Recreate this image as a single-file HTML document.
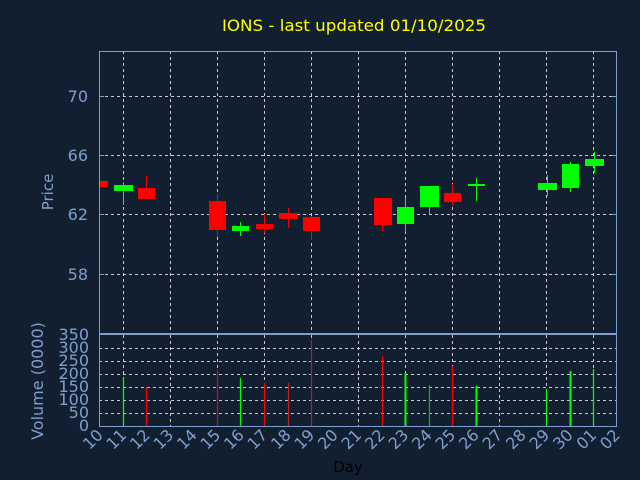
<!DOCTYPE html>
<html><head><meta charset="utf-8"><style>
html,body{margin:0;padding:0;background:#111f30;}
svg{display:block;font-family:"DejaVu Sans","Liberation Sans",sans-serif;}
</style></head><body>
<svg width="640" height="480" viewBox="0 0 640 480" xmlns="http://www.w3.org/2000/svg">
<rect width="640" height="480" fill="#111f30"/>
<text x="354" y="31" fill="#ffff00" font-size="16" text-anchor="middle" textLength="264" lengthAdjust="spacingAndGlyphs">IONS - last updated 01/10/2025</text>
<g stroke="#c8c8c8" stroke-width="1" stroke-dasharray="3,3" fill="none">
<line x1="99" y1="96.5" x2="617" y2="96.5"/>
<line x1="99" y1="155.5" x2="617" y2="155.5"/>
<line x1="99" y1="214.5" x2="617" y2="214.5"/>
<line x1="99" y1="274.5" x2="617" y2="274.5"/>
<line x1="123.5" y1="51" x2="123.5" y2="333"/><line x1="170.5" y1="51" x2="170.5" y2="333"/><line x1="217.5" y1="51" x2="217.5" y2="333"/><line x1="264.5" y1="51" x2="264.5" y2="333"/><line x1="311.5" y1="51" x2="311.5" y2="333"/><line x1="358.5" y1="51" x2="358.5" y2="333"/><line x1="405.5" y1="51" x2="405.5" y2="333"/><line x1="452.5" y1="51" x2="452.5" y2="333"/><line x1="499.5" y1="51" x2="499.5" y2="333"/><line x1="546.5" y1="51" x2="546.5" y2="333"/><line x1="593.5" y1="51" x2="593.5" y2="333"/>
<line x1="99" y1="348.5" x2="617" y2="348.5"/><line x1="99" y1="361.5" x2="617" y2="361.5"/><line x1="99" y1="374.5" x2="617" y2="374.5"/><line x1="99" y1="387.5" x2="617" y2="387.5"/><line x1="99" y1="400.5" x2="617" y2="400.5"/><line x1="99" y1="413.5" x2="617" y2="413.5"/>
<line x1="123.5" y1="335" x2="123.5" y2="427"/><line x1="170.5" y1="335" x2="170.5" y2="427"/><line x1="217.5" y1="335" x2="217.5" y2="427"/><line x1="264.5" y1="335" x2="264.5" y2="427"/><line x1="311.5" y1="335" x2="311.5" y2="427"/><line x1="358.5" y1="335" x2="358.5" y2="427"/><line x1="405.5" y1="335" x2="405.5" y2="427"/><line x1="452.5" y1="335" x2="452.5" y2="427"/><line x1="499.5" y1="335" x2="499.5" y2="427"/><line x1="546.5" y1="335" x2="546.5" y2="427"/><line x1="593.5" y1="335" x2="593.5" y2="427"/>
</g>
<g>
<rect x="99" y="181" width="9" height="6" fill="#ff0000"/>
<line x1="123.5" y1="182" x2="123.5" y2="205" stroke="#00ff00"/><rect x="114" y="185" width="19" height="6" fill="#00ff00"/>
<line x1="146.5" y1="176" x2="146.5" y2="200" stroke="#ff0000"/><rect x="138" y="188" width="17" height="11" fill="#ff0000"/>
<line x1="217.5" y1="194" x2="217.5" y2="237" stroke="#ff0000"/><rect x="209" y="201" width="17" height="29" fill="#ff0000"/>
<line x1="240.5" y1="222" x2="240.5" y2="236" stroke="#00ff00"/><rect x="232" y="226" width="17" height="5" fill="#00ff00"/>
<line x1="264.5" y1="214" x2="264.5" y2="233" stroke="#ff0000"/><rect x="256" y="224" width="17" height="5" fill="#ff0000"/>
<line x1="288.5" y1="208" x2="288.5" y2="228" stroke="#ff0000"/><rect x="279" y="213" width="19" height="6" fill="#ff0000"/>
<line x1="311.5" y1="216" x2="311.5" y2="240" stroke="#ff0000"/><rect x="303" y="217" width="17" height="14" fill="#ff0000"/>
<line x1="382.5" y1="198" x2="382.5" y2="231" stroke="#ff0000"/><rect x="374" y="198" width="18" height="27" fill="#ff0000"/>
<line x1="405.5" y1="198" x2="405.5" y2="232" stroke="#00ff00"/><rect x="397" y="207" width="17" height="17" fill="#00ff00"/>
<line x1="429.5" y1="186" x2="429.5" y2="214" stroke="#00ff00"/><rect x="420" y="186" width="19" height="21" fill="#00ff00"/>
<line x1="452.5" y1="184" x2="452.5" y2="206" stroke="#ff0000"/><rect x="444" y="193" width="17" height="9" fill="#ff0000"/>
<line x1="476.5" y1="178" x2="476.5" y2="201" stroke="#00ff00"/><rect x="468" y="184" width="17" height="2" fill="#00ff00"/>
<line x1="547.5" y1="175" x2="547.5" y2="196" stroke="#00ff00"/><rect x="538" y="183" width="19" height="7" fill="#00ff00"/>
<line x1="570.5" y1="162" x2="570.5" y2="192" stroke="#00ff00"/><rect x="562" y="164" width="17" height="24" fill="#00ff00"/>
<line x1="594.5" y1="152" x2="594.5" y2="173" stroke="#00ff00"/><rect x="585" y="159" width="19" height="7" fill="#00ff00"/>
</g>
<g stroke-width="1.3">
<line x1="123.5" y1="378" x2="123.5" y2="427" stroke="#00ff00"/>
<line x1="146.5" y1="387" x2="146.5" y2="427" stroke="#ff0000"/>
<line x1="217.5" y1="370" x2="217.5" y2="427" stroke="#a02020"/>
<line x1="240.5" y1="378" x2="240.5" y2="427" stroke="#00ff00"/>
<line x1="264.5" y1="383" x2="264.5" y2="427" stroke="#ff0000"/>
<line x1="288.5" y1="383" x2="288.5" y2="427" stroke="#c02020"/>
<line x1="311.5" y1="339" x2="311.5" y2="427" stroke="#803040"/>
<line x1="382.5" y1="356" x2="382.5" y2="427" stroke="#ff0000"/>
<line x1="405.5" y1="373" x2="405.5" y2="427" stroke="#00ff00" stroke-width="2"/>
<line x1="429.5" y1="385" x2="429.5" y2="427" stroke="#20a040"/>
<line x1="452.5" y1="366" x2="452.5" y2="427" stroke="#ff0000"/>
<line x1="476.5" y1="386" x2="476.5" y2="427" stroke="#00ff00" stroke-width="2"/>
<line x1="546.5" y1="389" x2="546.5" y2="427" stroke="#00ff00"/>
<line x1="570.5" y1="371" x2="570.5" y2="427" stroke="#00ff00" stroke-width="2"/>
<line x1="593.5" y1="369" x2="593.5" y2="427" stroke="#00ff00"/>
</g>
<g stroke="#7f9fcf" fill="none" stroke-width="1">
<rect x="99.5" y="51.5" width="517" height="282"/>
<rect x="99.5" y="334.5" width="517" height="92"/>
<line x1="99" y1="96.5" x2="104" y2="96.5"/><line x1="99" y1="155.5" x2="104" y2="155.5"/><line x1="99" y1="214.5" x2="104" y2="214.5"/><line x1="99" y1="274.5" x2="104" y2="274.5"/>
<line x1="612" y1="96.5" x2="617" y2="96.5"/><line x1="612" y1="155.5" x2="617" y2="155.5"/><line x1="612" y1="214.5" x2="617" y2="214.5"/><line x1="612" y1="274.5" x2="617" y2="274.5"/>
</g>
<g fill="#7f9fcf" font-size="16">
<text x="88" y="102" text-anchor="end">70</text>
<text x="88" y="161" text-anchor="end">66</text>
<text x="88" y="220" text-anchor="end">62</text>
<text x="88" y="280" text-anchor="end">58</text>
<text transform="translate(53,192) rotate(-90)" text-anchor="middle" font-size="15">Price</text>
<text transform="translate(43,381) rotate(-90)" text-anchor="middle" font-size="16">Volume (0000)</text>
<g font-size="16" text-anchor="end">
<text x="89" y="340">350</text><text x="89" y="353">300</text><text x="89" y="366">250</text><text x="89" y="379">200</text><text x="89" y="392">150</text><text x="89" y="405">100</text><text x="89" y="418">50</text><text x="89" y="431">0</text>
</g>
<g font-size="16" text-anchor="end">
<text transform="translate(104,436) rotate(-45)">10</text>
<text transform="translate(127.5,436) rotate(-45)">11</text>
<text transform="translate(151,436) rotate(-45)">12</text>
<text transform="translate(174.5,436) rotate(-45)">13</text>
<text transform="translate(198,436) rotate(-45)">14</text>
<text transform="translate(221.5,436) rotate(-45)">15</text>
<text transform="translate(245,436) rotate(-45)">16</text>
<text transform="translate(268.5,436) rotate(-45)">17</text>
<text transform="translate(292,436) rotate(-45)">18</text>
<text transform="translate(315.5,436) rotate(-45)">19</text>
<text transform="translate(339,436) rotate(-45)">20</text>
<text transform="translate(362.5,436) rotate(-45)">21</text>
<text transform="translate(386,436) rotate(-45)">22</text>
<text transform="translate(409.5,436) rotate(-45)">23</text>
<text transform="translate(433,436) rotate(-45)">24</text>
<text transform="translate(456.5,436) rotate(-45)">25</text>
<text transform="translate(480,436) rotate(-45)">26</text>
<text transform="translate(503.5,436) rotate(-45)">27</text>
<text transform="translate(527,436) rotate(-45)">28</text>
<text transform="translate(550.5,436) rotate(-45)">29</text>
<text transform="translate(574,436) rotate(-45)">30</text>
<text transform="translate(597.5,436) rotate(-45)">01</text>
<text transform="translate(621,436) rotate(-45)">02</text>
</g>
</g>
<text x="348" y="472" fill="#000000" font-size="15" text-anchor="middle">Day</text>
</svg>
</body></html>
